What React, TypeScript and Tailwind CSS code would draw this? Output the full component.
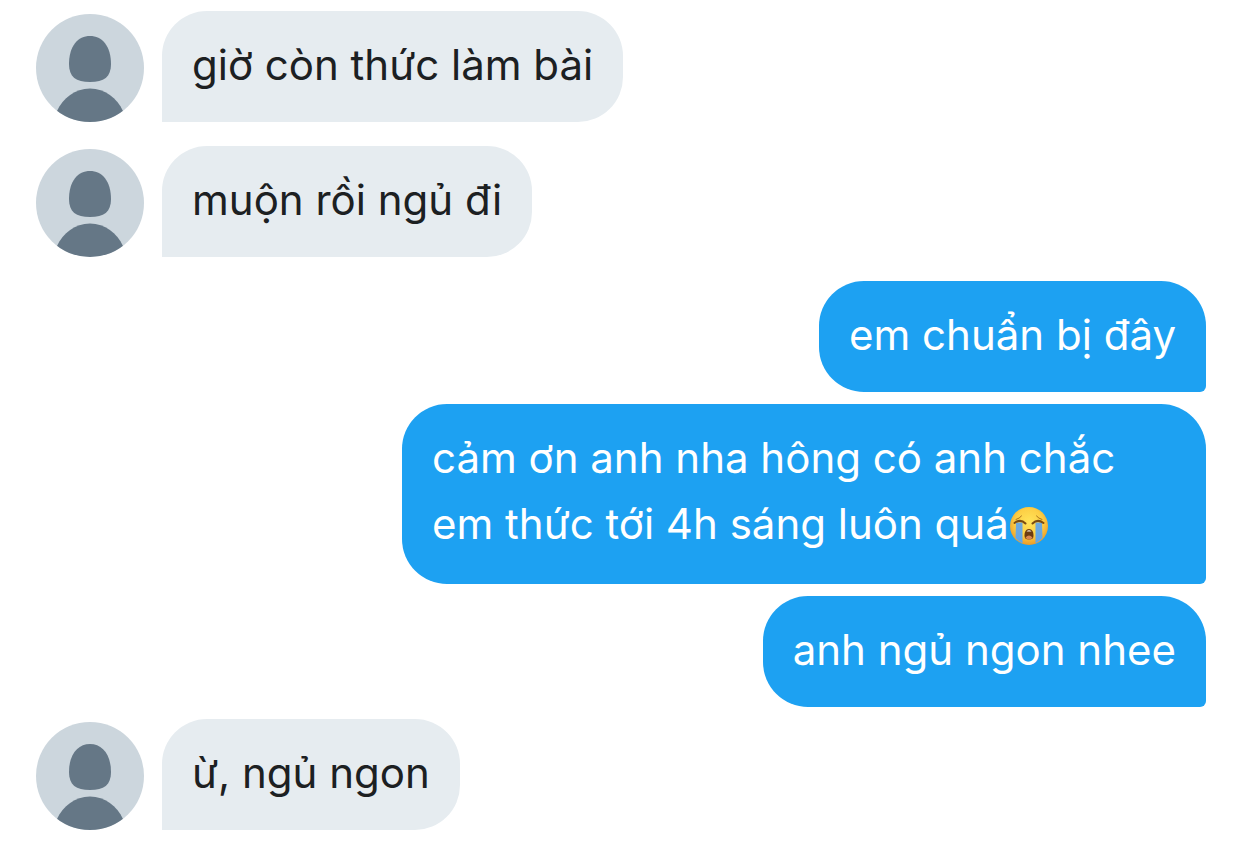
import { clsx } from 'clsx';

type Message = {
  id: number;
  from: 'me' | 'them';
  text: string;
  crying?: boolean;
  newGroup?: boolean;
};

const messages: Message[] = [
  { id: 1, from: 'them', text: 'giờ còn thức làm bài' },
  { id: 2, from: 'them', text: 'muộn rồi ngủ đi', newGroup: true },
  { id: 3, from: 'me', text: 'em chuẩn bị đây', newGroup: true },
  { id: 4, from: 'me', text: 'cảm ơn anh nha hông có anh chắc em thức tới 4h sáng luôn quá', crying: true },
  { id: 5, from: 'me', text: 'anh ngủ ngon nhee' },
  { id: 6, from: 'them', text: 'ừ, ngủ ngon' },
];

const Avatar = () => (
  <svg viewBox="0 0 108 108" className="size-[108px] shrink-0 rounded-full bg-[#ccd6dd]" aria-hidden="true">
    <path
      d="M54 22C66 22 75 32 75 50C75 63 68 68 54 68C40 68 33 63 33 50C33 32 42 22 54 22Z"
      fill="#657786"
    />
    <path d="M21 97C27 84 39 74.500 54 74.500C69 74.500 81 84 87 97L87 108L21 108Z" fill="#657786" />
  </svg>
);

const CryingFace = () => (
  <svg viewBox="0 0 40 40" className="inline-block size-10 align-[-7px]" role="img" aria-label="Loudly crying face">
    <defs>
      <radialGradient id="face" cx="0.5" cy="0.4" r="0.6">
        <stop offset="0" stopColor="#ffe45a" />
        <stop offset="0.6" stopColor="#fdcf45" />
        <stop offset="1" stopColor="#ec9a25" />
      </radialGradient>
      <linearGradient id="tears" x1="0" y1="0" x2="0" y2="1">
        <stop offset="0" stopColor="#6fa9dc" />
        <stop offset="1" stopColor="#5ea6ec" />
      </linearGradient>
    </defs>
    <circle cx="20" cy="20" r="19" fill="url(#face)" />
    <path d="M7 16.500H13.500V37.500Q9.500 35.500 6.500 32Z" fill="url(#tears)" />
    <path d="M26.500 16.500H33L33.500 32Q30.500 35.500 26.500 37.500Z" fill="url(#tears)" />
    <g fill="none" stroke="#7a4b12" strokeLinecap="round">
      <path d="M7 13.500Q10.500 12.500 12.500 10M33 13.500Q29.500 12.500 27.500 10" stroke="#a8701c" strokeWidth="1" />
      <path d="M5.500 17Q11.500 12.500 16.500 17.500M23.500 17.500Q28.500 12.500 34.500 17" strokeWidth="2" />
    </g>
    <path d="M20 23C23.200 23 24.500 26 24.500 29.500C24.500 32.500 23 33.500 20 33.500C17 33.500 15.500 32.500 15.500 29.500C15.500 26 16.800 23 20 23Z" fill="#6c3b10" />
    <path d="M17.500 25.500Q20 23 22.500 25.500Z" fill="#f6efe2" />
    <path d="M16.500 31.500Q20 27.500 23.500 31.500Q22.500 33.500 20 33.500Q17.500 33.500 16.500 31.500Z" fill="#d98550" />
  </svg>
);

const MessageRow = ({ message }: { message: Message }) => {
  const mine = message.from === 'me';

  return (
    <li
      className={clsx(
        'flex items-end gap-[18px]',
        mine && 'justify-end',
        message.newGroup && 'mt-3',
      )}
    >
      {!mine && <Avatar />}
      <p
        className={clsx(
          'max-w-[804px] px-[30px] pt-[21px] text-[42px] leading-[66px]',
          message.crying ? 'pb-[27px]' : 'pb-6',
          mine
            ? 'rounded-[45px] rounded-br-md bg-[#1da1f2] text-white'
            : 'rounded-[45px] rounded-bl-none bg-[#e6ecf0] text-[#1c2022]',
        )}
      >
        {message.text}
        {message.crying && <CryingFace />}
      </p>
    </li>
  );
};

export default function App() {
  return (
    <main className="min-h-screen bg-white px-9 pt-[11px] pb-5 font-['Inter','Noto_Sans',sans-serif]">
      <ul className="flex flex-col gap-3">
        {messages.map((message) => (
          <MessageRow key={message.id} message={message} />
        ))}
      </ul>
    </main>
  );
}
